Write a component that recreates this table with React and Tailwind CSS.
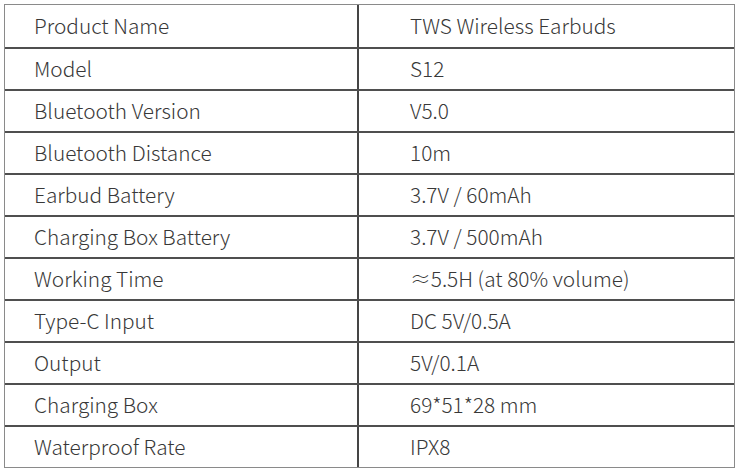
import React from "react";

const specs = [
  ["Product Name", "TWS Wireless Earbuds"],
  ["Model", "S12"],
  ["Bluetooth Version", "V5.0"],
  ["Bluetooth Distance", "10m"],
  ["Earbud Battery", "3.7V / 60mAh"],
  ["Charging Box Battery", "3.7V / 500mAh"],
  ["Working Time", "≈5.5H (at 80% volume)"],
  ["Type-C Input", "DC 5V/0.5A"],
  ["Output", "5V/0.1A"],
  ["Charging Box", "69*51*28 mm"],
  ["Waterproof Rate", "IPX8"],
];

const App = () => {
  return (
    <div
      className="w-[743px] h-[471px] bg-white pl-[4px] pt-[4px]"
      style={{ fontFamily: '"Noto Sans CJK SC", "Noto Sans", sans-serif' }}
    >
      <div className="w-[731px] border border-[#8a8a8a] text-[20.8px] text-[#383838] font-light">
        {specs.map(([label, value], i) => (
          <div
            key={label}
            className={
              i === 0
                ? "flex h-[42px]"
                : "flex h-[42px] border-t-2 border-[#4f4f4f]"
            }
          >
            <div className="w-[354px] flex items-center pl-[29px] border-r-2 border-[#454545]">
              {label}
            </div>
            <div className="flex-1 flex items-center pl-[51px]">{value}</div>
          </div>
        ))}
      </div>
    </div>
  );
};

export default App;
